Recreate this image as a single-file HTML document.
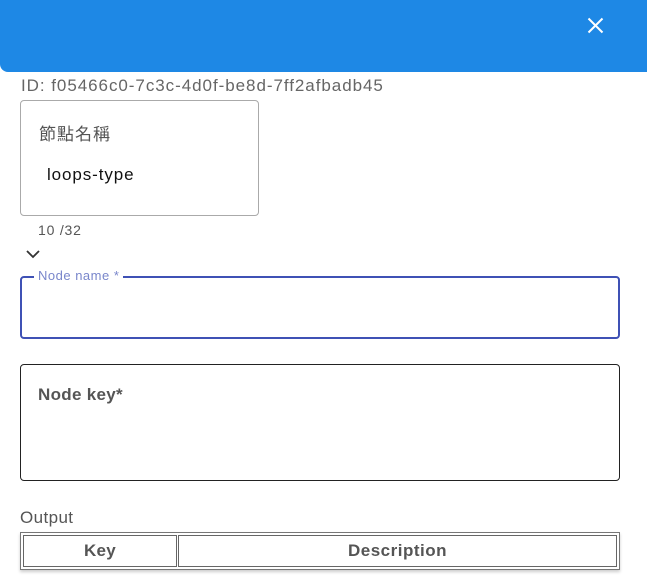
<!DOCTYPE html>
<html><head><meta charset="utf-8"><style>
*{margin:0;padding:0;box-sizing:border-box}
html,body{width:647px;height:587px;overflow:hidden;background:#fff;font-family:"Liberation Sans","Noto Sans CJK TC",sans-serif;position:relative}
.hdr{position:absolute;left:0;top:0;width:647px;height:72px;background:#1e88e5;border-bottom-left-radius:8px}
.abs{position:absolute;white-space:nowrap}
</style></head><body>
<div class="hdr"></div>
<svg class="abs" style="left:586px;top:16px" width="19" height="19" viewBox="0 0 19 19"><path d="M2.5 2.5L16.5 16.5M16.5 2.5L2.5 16.5" stroke="#fff" stroke-width="2"/></svg>
<div class="abs" style="left:21px;top:76px;font-size:17px;color:#666;letter-spacing:0.95px">ID: f05466c0-7c3c-4d0f-be8d-7ff2afbadb45</div>
<div class="abs" style="left:20px;top:100px;width:239px;height:116px;border:1px solid #aaa;border-radius:4px"></div>
<div class="abs" style="left:39px;top:120px;font-size:17px;color:#555;letter-spacing:1px">節點名稱</div>
<div class="abs" style="left:47px;top:165px;font-size:17px;color:#111;letter-spacing:0.9px">loops-type</div>
<div class="abs" style="left:38px;top:222px;font-size:14px;color:#555;letter-spacing:0.8px">10 /32</div>
<svg class="abs" style="left:26px;top:249px" width="14" height="10" viewBox="0 0 14 10"><path d="M1 2L7 8L13 2" stroke="#333" stroke-width="1.8" fill="none"/></svg>
<div class="abs" style="left:20px;top:276px;width:600px;height:63px;border:2px solid #3f51b5;border-radius:4px"></div>
<div class="abs" style="left:34px;top:268px;padding:0 4px;background:#fff;font-size:13px;color:#7986cb;line-height:16px;letter-spacing:0.5px">Node name *</div>
<div class="abs" style="left:20px;top:364px;width:600px;height:117px;border:1px solid #222;border-radius:4px"></div>
<div class="abs" style="left:38px;top:385px;font-size:17px;font-weight:bold;color:#555;letter-spacing:0.3px">Node key*</div>
<div class="abs" style="left:20px;top:508px;font-size:17px;color:#555;letter-spacing:0.4px">Output</div>
<div class="abs" style="left:20px;top:532px;width:600px;height:38px;border:1px solid #777;box-shadow:0 2px 3px rgba(0,0,0,0.2)"></div>
<div class="abs" style="left:23px;top:535px;width:154px;height:32px;border:1px solid #666;text-align:center;font-size:17px;font-weight:bold;color:#555;line-height:30px;letter-spacing:0.3px">Key</div>
<div class="abs" style="left:178px;top:535px;width:439px;height:32px;border:1px solid #666;text-align:center;font-size:17px;font-weight:bold;color:#555;line-height:30px;letter-spacing:0.5px">Description</div>
</body></html>
